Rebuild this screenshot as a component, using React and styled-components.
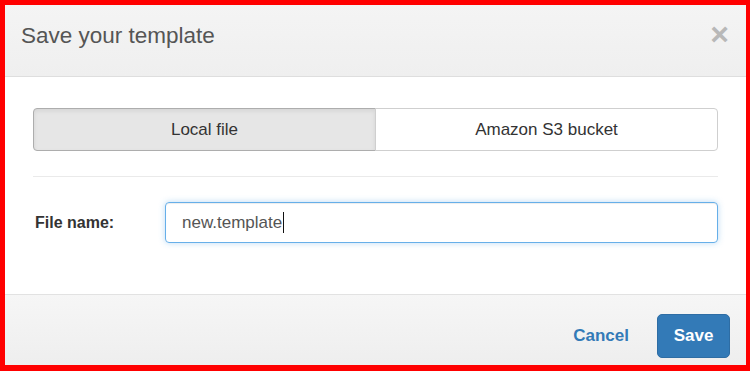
import React from 'react';
import styled, { createGlobalStyle } from 'styled-components';

const GlobalStyle = createGlobalStyle`
  * { box-sizing: border-box; }
  body {
    margin: 0;
    font-family: 'Liberation Sans', Arial, sans-serif;
    background: #fff;
  }
`;

const Frame = styled.div`
  width: 750px;
  height: 371px;
  border-style: solid;
  border-color: #ff0000;
  border-width: 5px 4px 6px 5px;
  display: flex;
  flex-direction: column;
  background: #fff;
`;

const Header = styled.div`
  height: 72px;
  flex: none;
  display: flex;
  align-items: flex-start;
  justify-content: space-between;
  padding: 16px 17px 0 16px;
  background: linear-gradient(#f4f4f4, #efefef);
  border-bottom: 1px solid #dedede;
`;

const Title = styled.h4`
  margin: 0;
  font-size: 22.5px;
  font-weight: normal;
  line-height: 30px;
  color: #555;
`;

const Close = styled.span`
  font-size: 32px;
  font-weight: bold;
  line-height: 26px;
  color: #b8b8b8;
`;

const Body = styled.div`
  flex: 1;
  padding: 31px 28px 0 28px;
  display: flex;
  flex-direction: column;
`;

const Tabs = styled.div`
  display: flex;
  height: 43px;
`;

const Tab = styled.button`
  flex: 1;
  font-family: inherit;
  font-size: 17px;
  color: #333;
  border: 1px solid #cfcfcf;
  background: ${(p) => (p.active ? '#e6e6e6' : '#fff')};
  box-shadow: ${(p) => (p.active ? 'inset 0 2px 4px rgba(0,0,0,0.08)' : 'none')};
  border-color: ${(p) => (p.active ? '#adadad' : '#cfcfcf')};
  border-radius: ${(p) => (p.first ? '4px 0 0 4px' : '0 4px 4px 0')};
  margin-left: ${(p) => (p.first ? '0' : '-1px')};
  cursor: pointer;
  padding: 0;
`;

const Divider = styled.hr`
  margin: 25px 0 0 0;
  border: none;
  border-top: 1px solid #eaeaea;
`;

const Row = styled.div`
  display: flex;
  align-items: center;
  margin-top: 25px;
`;

const Label = styled.label`
  width: 132px;
  padding-left: 2px;
  font-size: 16px;
  font-weight: bold;
  color: #333;
`;

const Field = styled.div`
  flex: 1;
  height: 41px;
  display: flex;
  align-items: center;
  padding: 0 16px;
  border: 1px solid #66afe9;
  border-radius: 4px;
  box-shadow: inset 0 1px 1px rgba(0,0,0,0.075), 0 0 6px rgba(102,175,233,0.45);
  font-size: 17px;
  color: #555;
`;

const Caret = styled.span`
  display: inline-block;
  width: 1px;
  height: 21px;
  background: #111;
  margin-left: 1px;
`;

const Footer = styled.div`
  height: 71px;
  flex: none;
  display: flex;
  align-items: center;
  justify-content: flex-end;
  gap: 28px;
  padding: 11px 16px 0 0;
  border-top: 1px solid #e2e2e2;
  background: linear-gradient(#f6f6f6, #eeeeee);
`;

const LinkButton = styled.button`
  border: none;
  background: none;
  padding: 0;
  font-family: inherit;
  font-size: 17px;
  font-weight: bold;
  color: #337ab7;
  cursor: pointer;
`;

const PrimaryButton = styled.button`
  width: 73px;
  height: 44px;
  border: 1px solid #2e6da4;
  border-radius: 5px;
  background: #337ab7;
  color: #fff;
  font-family: inherit;
  font-size: 17px;
  font-weight: bold;
  cursor: pointer;
  padding: 0;
`;

export default function App() {
  return (
    <>
      <GlobalStyle />
      <Frame>
        <Header>
          <Title>Save your template</Title>
          <Close>×</Close>
        </Header>
        <Body>
          <Tabs>
            <Tab first active>Local file</Tab>
            <Tab>Amazon S3 bucket</Tab>
          </Tabs>
          <Divider />
          <Row>
            <Label>File name:</Label>
            <Field>
              new.template<Caret />
            </Field>
          </Row>
        </Body>
        <Footer>
          <LinkButton>Cancel</LinkButton>
          <PrimaryButton>Save</PrimaryButton>
        </Footer>
      </Frame>
    </>
  );
}
